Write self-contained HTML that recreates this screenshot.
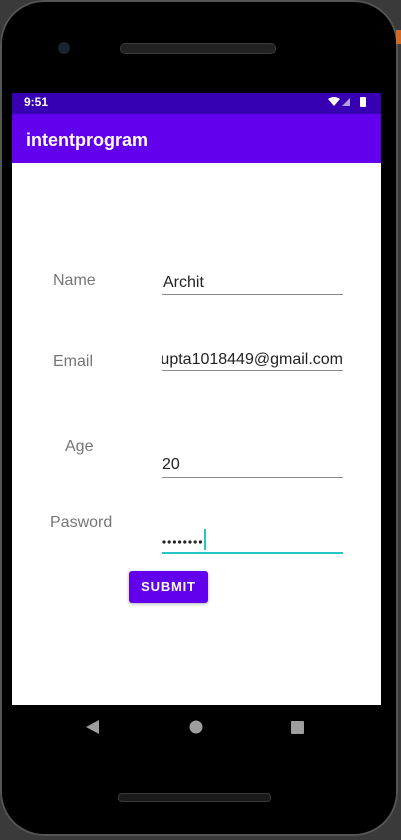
<!DOCTYPE html>
<html><head><style>
body{margin:0;width:401px;height:840px;background:#3a3a3a;position:relative;overflow:hidden;font-family:"Liberation Sans",sans-serif}
.phone{position:absolute;left:0;top:0;width:398px;height:836px;background:#000;border-radius:44px;box-shadow:inset 0 0 0 2px #555}
.abs{position:absolute}
.lbl{position:absolute;color:#757575;font-size:16px}
.val{position:absolute;color:#222;font-size:16px}
.line{position:absolute;left:162px;width:181px;height:1px;background:#8a8a8a}
</style></head><body>
<div class="phone"></div>
<div class="abs" style="left:396px;top:30px;width:5px;height:14px;background:#d06a2a"></div>
<div class="abs" style="left:120px;top:43px;width:154px;height:9px;border-radius:5px;background:#222;border:1px solid #3a3a3a"></div>
<div class="abs" style="left:58px;top:42px;width:12px;height:12px;border-radius:50%;background:#1b2230"></div>
<div class="abs" style="left:12px;top:93px;width:369px;height:21px;background:#3700b3"></div>
<div class="abs" style="left:24px;top:95px;color:#fff;font-size:12px;font-weight:bold">9:51</div>
<svg class="abs" style="left:328px;top:96px" width="44" height="14" viewBox="0 0 44 14"><path d="M0 3 Q6 -1 12 3 L6 10 Z" fill="#fff"/><path d="M22 2 L22 10 L14 10 Z" fill="#b4a0e8"/><rect x="32" y="1" width="6" height="10" rx="1" fill="#fff"/></svg>
<div class="abs" style="left:12px;top:114px;width:369px;height:49px;background:#6200ee"></div>
<div class="abs" style="left:26px;top:130px;color:#fff;font-size:18px;font-weight:bold">intentprogram</div>
<div class="abs" style="left:12px;top:163px;width:369px;height:542px;background:#fff"></div>
<div class="lbl" style="left:53px;top:272px">Name</div>
<div class="val" style="left:163px;top:274px">Archit</div>
<div class="line" style="top:294px"></div>
<div class="lbl" style="left:53px;top:353px">Email</div>
<div class="val" style="left:162px;top:351px;width:181px;overflow:hidden;white-space:nowrap;direction:rtl">upta1018449@gmail.com</div>
<div class="line" style="top:370px"></div>
<div class="lbl" style="left:65px;top:438px">Age</div>
<div class="val" style="left:162px;top:456px">20</div>
<div class="line" style="top:477px"></div>
<div class="lbl" style="left:50px;top:514px">Pasword</div>
<svg class="abs" style="left:162px;top:539px" width="44" height="6"><g fill="#222"><circle cx="2" cy="3" r="1.6"/><circle cx="7.2" cy="3" r="1.6"/><circle cx="12.4" cy="3" r="1.6"/><circle cx="17.6" cy="3" r="1.6"/><circle cx="22.8" cy="3" r="1.6"/><circle cx="28" cy="3" r="1.6"/><circle cx="33.2" cy="3" r="1.6"/><circle cx="38.4" cy="3" r="1.6"/></g></svg>
<div class="abs" style="left:204px;top:529px;width:2px;height:21px;background:#26c6c6"></div>
<div class="abs" style="left:162px;top:552px;width:181px;height:2px;background:#26c6c6"></div>
<div class="abs" style="left:129px;top:571px;width:79px;height:32px;background:#6200ee;border-radius:3px;box-shadow:0 1px 3px rgba(0,0,0,.3);color:#fff;font-size:13px;font-weight:bold;letter-spacing:.8px;text-align:center;line-height:32px">SUBMIT</div>
<svg class="abs" style="left:85px;top:718px" width="230" height="20"><path d="M1 9 L14 2 L14 16 Z" fill="#9e9e9e"/><circle cx="111" cy="9" r="6.5" fill="#9e9e9e"/><rect x="206" y="3" width="13" height="13" rx="1" fill="#9e9e9e"/></svg>
<div class="abs" style="left:118px;top:793px;width:151px;height:7px;border-radius:4px;background:#1a1a1a;border:1px solid #3a3a3a"></div>
</body></html>
